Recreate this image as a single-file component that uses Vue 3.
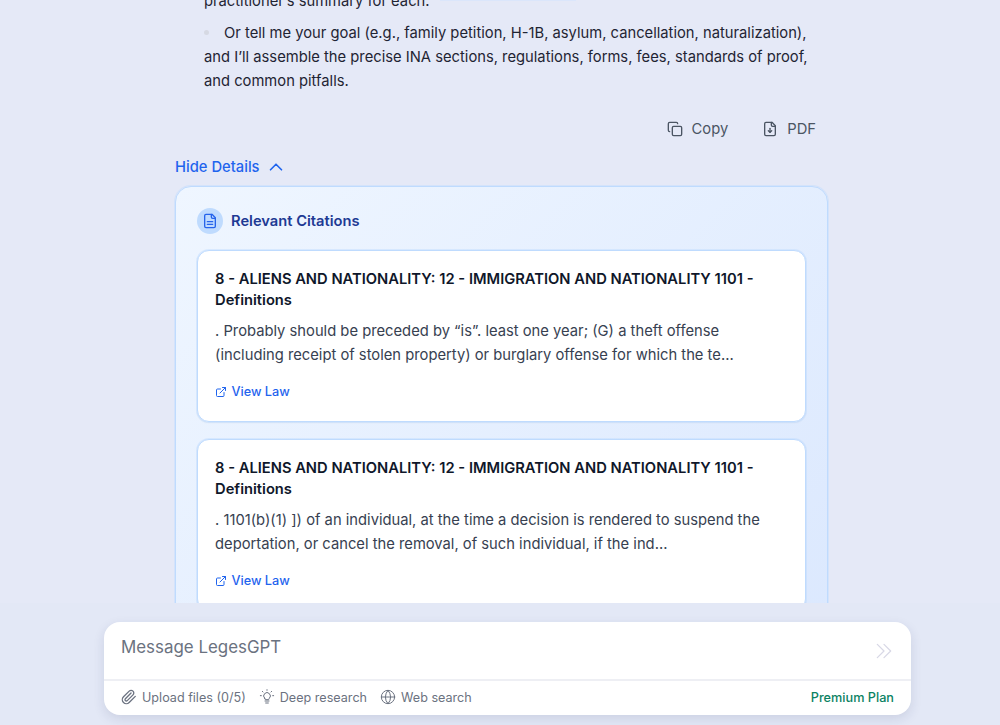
<script setup>
const citations = [
  {
    title: '8 - ALIENS AND NATIONALITY: 12 - IMMIGRATION AND NATIONALITY 1101 - Definitions',
    body: '. Probably should be preceded by “is”. least one year; (G) a theft offense (including receipt of stolen property) or burglary offense for which the te...'
  },
  {
    title: '8 - ALIENS AND NATIONALITY: 12 - IMMIGRATION AND NATIONALITY 1101 - Definitions',
    body: '. 1101(b)(1) ]) of an individual, at the time a decision is rendered to suspend the deportation, or cancel the removal, of such individual, if the ind...'
  }
]
</script>

<template>
  <div class="page">
    <main class="thread">
      <div class="answer">
        <p class="line first">practitioner’s summary for each.</p>
        <p class="line bullet"><span class="dot"></span>Or tell me your goal (e.g., family petition, H-1B, asylum, cancellation, naturalization), and I’ll assemble the precise INA sections, regulations, forms, fees, standards of proof, and common pitfalls.</p>
      </div>
      <div class="actions">
        <button class="action">
          <svg width="16" height="16" viewBox="0 0 24 24" fill="none" stroke="currentColor" stroke-width="2" stroke-linecap="round" stroke-linejoin="round"><rect x="8" y="8" width="14" height="14" rx="2"/><path d="M4 16c-1.100 0-2-.9-2-2V4c0-1.100.9-2 2-2h10c1.100 0 2 .9 2 2"/></svg>
          Copy
        </button>
        <button class="action">
          <svg width="16" height="16" viewBox="0 0 24 24" fill="none" stroke="currentColor" stroke-width="2" stroke-linecap="round" stroke-linejoin="round"><path d="M15 2H6a2 2 0 0 0-2 2v16a2 2 0 0 0 2 2h12a2 2 0 0 0 2-2V7z"/><path d="M14 2v4a2 2 0 0 0 2 2h4"/><path d="M12 11v6"/><path d="m9.500 14.500 2.500 2.500 2.500-2.500"/></svg>
          PDF
        </button>
      </div>
      <button class="toggle">
        Hide Details
        <svg width="22" height="22" viewBox="0 0 24 24" fill="none" stroke="currentColor" stroke-width="1.800" stroke-linecap="round" stroke-linejoin="round"><path d="m18 15-6-6-6 6"/></svg>
      </button>
      <section class="panel">
        <header class="panel-head">
          <span class="badge">
            <svg width="16" height="16" viewBox="0 0 24 24" fill="none" stroke="currentColor" stroke-width="2" stroke-linecap="round" stroke-linejoin="round"><path d="M15 2H6a2 2 0 0 0-2 2v16a2 2 0 0 0 2 2h12a2 2 0 0 0 2-2V7z"/><path d="M14 2v4a2 2 0 0 0 2 2h4"/><path d="M16 13H8"/><path d="M16 17H8"/></svg>
          </span>
          <h3>Relevant Citations</h3>
        </header>
        <article v-for="(c, i) in citations" :key="i" class="card">
          <h4>{{ c.title }}</h4>
          <p>{{ c.body }}</p>
          <a class="law">
            <svg width="12" height="12" viewBox="0 0 24 24" fill="none" stroke="currentColor" stroke-width="2" stroke-linecap="round" stroke-linejoin="round"><path d="M15 3h6v6"/><path d="M10 14 21 3"/><path d="M18 13v6a2 2 0 0 1-2 2H5a2 2 0 0 1-2-2V8a2 2 0 0 1 2-2h6"/></svg>
            View Law
          </a>
        </article>
      </section>
    </main>
    <footer class="dock">
      <div class="composer">
        <div class="input-row">
          <span class="placeholder">Message LegesGPT</span>
          <svg class="send" width="20" height="20" viewBox="0 0 24 24" fill="none" stroke="currentColor" stroke-width="1.500" stroke-linecap="round" stroke-linejoin="round"><path d="m4 4 8 8-8 8"/><path d="m12 4 8 8-8 8"/></svg>
        </div>
        <div class="tool-row">
          <span class="tool">
            <svg width="16" height="16" viewBox="0 0 24 24" fill="none" stroke="currentColor" stroke-width="2" stroke-linecap="round" stroke-linejoin="round"><path d="m21.440 11.050-9.190 9.190a6 6 0 0 1-8.490-8.490l8.570-8.570A4 4 0 1 1 18 8.840l-8.590 8.570a2 2 0 0 1-2.830-2.830l8.490-8.480"/></svg>
            Upload files (0/5)
          </span>
          <span class="tool">
            <svg width="16" height="16" viewBox="0 0 24 24" fill="none" stroke="currentColor" stroke-width="1.500" stroke-linecap="round" stroke-linejoin="round"><path d="M9 18h6"/><path d="M10 21h4"/><path d="M8.500 14a5 5 0 1 1 7 0c-.6.6-1 1.300-1 2h-5c0-.7-.4-1.400-1-2z"/><path d="M2 10h1.500M20.500 10H22M5 3.500l1 1M19 3.500l-1 1M12 1v1"/></svg>
            Deep research
          </span>
          <span class="tool">
            <svg width="16" height="16" viewBox="0 0 24 24" fill="none" stroke="currentColor" stroke-width="1.500" stroke-linecap="round" stroke-linejoin="round"><circle cx="12" cy="12" r="10"/><path d="M12 2a14.500 14.500 0 0 0 0 20 14.500 14.500 0 0 0 0-20"/><path d="M2 12h20"/></svg>
            Web search
          </span>
          <span class="plan">Premium Plan</span>
        </div>
      </div>
    </footer>
  </div>
</template>

<style>
html, body { margin: 0; background: #e4e8f6; }
</style>

<style scoped>
.page {
  width: 1000px;
  height: 725px;
  overflow: hidden;
  display: flex;
  flex-direction: column;
  font-family: Inter, "Liberation Sans", sans-serif;
  background: #e5e9f7;
}
.thread {
  position: relative;
  height: 603px;
  flex: none;
  overflow: hidden;
  padding: 0 172px 0 175px;
}
.thread::before {
  content: "";
  position: absolute;
  top: 0;
  left: 440px;
  width: 136px;
  height: 1px;
  background: #dbe6fb;
}
.answer { padding: 0 20px 0 29px; margin-top: -11px; }
.line {
  margin: 0;
  font-size: 14.750px;
  line-height: 24px;
  color: #1f2433;
}
.bullet { margin-top: 8px; }
.dot {
  display: inline-block;
  width: 5px;
  height: 5px;
  border-radius: 50%;
  background: #d6d9e3;
  margin-right: 15px;
  vertical-align: 3px;
}
.actions {
  display: flex;
  justify-content: flex-end;
  gap: 34px;
  margin-top: 24px;
  padding-right: 12px;
}
.action, .toggle {
  display: flex;
  align-items: center;
  border: 0;
  background: none;
  padding: 0;
  font: inherit;
}
.action {
  gap: 9px;
  font-size: 14.750px;
  line-height: 24px;
  color: #4b5563;
}
.toggle {
  gap: 5px;
  margin-top: 14px;
  height: 24px;
  font-size: 14.750px;
  line-height: 24px;
  font-weight: 500;
  color: #1f64ee;
}
.panel {
  margin-top: 7px;
  padding: 21px;
  border: 1px solid #bfdbfe;
  border-radius: 16px;
  background: linear-gradient(135deg, #eff6ff, #dbe8fe);
  box-shadow: 0 0 0 1px rgba(191, 219, 254, .45);
}
.panel-head {
  display: flex;
  align-items: center;
  gap: 8px;
  margin-bottom: 16px;
}
.badge {
  width: 26px;
  height: 26px;
  border-radius: 50%;
  background: #bfdbfe;
  color: #2563eb;
  display: flex;
  align-items: center;
  justify-content: center;
}
.panel-head h3 {
  margin: 0;
  font-size: 14.700px;
  line-height: 24px;
  font-weight: 600;
  color: #1e3a94;
}
.card {
  background: #fff;
  border: 1px solid #bfdbfe;
  border-radius: 12px;
  padding: 18px 17px 19px;
  margin-bottom: 17px;
  box-shadow: 0 0 0 1px rgba(191, 219, 254, .45), 0 1px 2px rgba(0, 0, 0, .05);
}
.card h4 {
  margin: 0;
  font-size: 14.720px;
  line-height: 21px;
  font-weight: 600;
  color: #0f172a;
}
.card p {
  margin: 8px 0 0;
  font-size: 14.750px;
  line-height: 24px;
  color: #374151;
}
.law {
  display: flex;
  align-items: center;
  gap: 4.500px;
  margin-top: 15px;
  font-size: 12.700px;
  line-height: 20px;
  font-weight: 500;
  color: #1f64ee;
}
.dock {
  flex: 1;
  padding: 19px 89px 0 104px;
  background: #e3e8f6;
}
.composer {
  background: #fff;
  border-radius: 16px;
  height: 93px;
  display: flex;
  flex-direction: column;
  box-shadow: 0 4px 12px rgba(30, 40, 90, .12);
}
.input-row {
  height: 59px;
  flex: none;
  display: flex;
  justify-content: space-between;
  padding: 13px 17px 0;
  box-sizing: border-box;
  border-bottom: 2px solid #eeeff4;
}
.placeholder { font-size: 16.900px; line-height: 24px; color: #6b7280; }
.send { color: #d8d8e6; margin-top: 6px; }
.tool-row {
  flex: 1;
  display: flex;
  align-items: center;
  padding: 0 17px 2px;
  gap: 13px;
}
.tool {
  display: flex;
  align-items: center;
  gap: 5px;
  font-size: 12.600px;
  color: #6b7280;
}
.plan {
  margin-left: auto;
  font-size: 12.700px;
  font-weight: 500;
  color: #0b8263;
}
</style>
